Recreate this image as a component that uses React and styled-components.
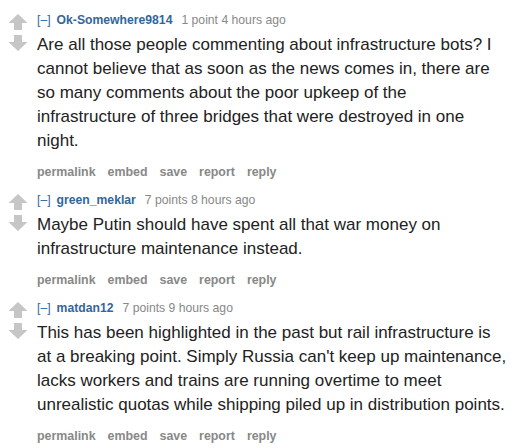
import React from "react";
import styled, { createGlobalStyle } from "styled-components";

const Global = createGlobalStyle`
  html, body { margin: 0; padding: 0; background: #fff; }
  body { font-family: "Liberation Sans", Arial, sans-serif; }
`;

const List = styled.div`
  display: flex;
  flex-direction: column;
  gap: 10px;
  padding: 11px 6px 0 8px;
  width: 515px;
  box-sizing: border-box;
`;

const Comment = styled.div`
  display: flex;
  gap: 9px;
`;

const Votes = styled.div`
  display: flex;
  flex-direction: column;
  gap: 3px;
  padding-top: 3px;
  width: 20px;
  flex: none;
`;

const Main = styled.div`
  flex: 1;
  min-width: 0;
`;

const Tagline = styled.div`
  font-size: 12.2px;
  line-height: 18px;
  color: #888;
`;

const Expand = styled.span`
  color: #369;
  margin-right: 6px;
`;

const Author = styled.span`
  color: #369;
  font-weight: bold;
  margin-right: 9px;
`;

const Body = styled.p`
  margin: 4px 0 0;
  font-size: 17px;
  line-height: 24px;
  color: #222;
`;

const Buttons = styled.ul`
  list-style: none;
  margin: 10px 0 0;
  padding: 0;
  display: flex;
  gap: 12px;
  font-size: 12.4px;
  line-height: 18px;
  font-weight: bold;
  color: #888;
`;

const Arrow = ({ down }) => (
  <svg width="20" height="17" viewBox="0 0 20 17" style={{ display: "block", transform: down ? "rotate(180deg)" : undefined }}>
    <polygon points="10,0 19.5,9 14,9 14,16 6,16 6,9 0.5,9" fill="#c6c6c6" />
  </svg>
);

const comments = [
  {
    author: "Ok-Somewhere9814",
    meta: "1 point 4 hours ago",
    text: "Are all those people commenting about infrastructure bots? I cannot believe that as soon as the news comes in, there are so many comments about the poor upkeep of the infrastructure of three bridges that were destroyed in one night.",
  },
  {
    author: "green_meklar",
    meta: "7 points 8 hours ago",
    text: "Maybe Putin should have spent all that war money on infrastructure maintenance instead.",
  },
  {
    author: "matdan12",
    meta: "7 points 9 hours ago",
    text: "This has been highlighted in the past but rail infrastructure is at a breaking point. Simply Russia can't keep up maintenance, lacks workers and trains are running overtime to meet unrealistic quotas while shipping piled up in distribution points.",
  },
];

export default function App() {
  return (
    <>
      <Global />
      <List>
        {comments.map((c) => (
          <Comment key={c.author}>
            <Votes>
              <Arrow />
              <Arrow down />
            </Votes>
            <Main>
              <Tagline>
                <Expand>[–]</Expand>
                <Author>{c.author}</Author>
                {c.meta}
              </Tagline>
              <Body>{c.text}</Body>
              <Buttons>
                <li>permalink</li>
                <li>embed</li>
                <li>save</li>
                <li>report</li>
                <li>reply</li>
              </Buttons>
            </Main>
          </Comment>
        ))}
      </List>
    </>
  );
}
